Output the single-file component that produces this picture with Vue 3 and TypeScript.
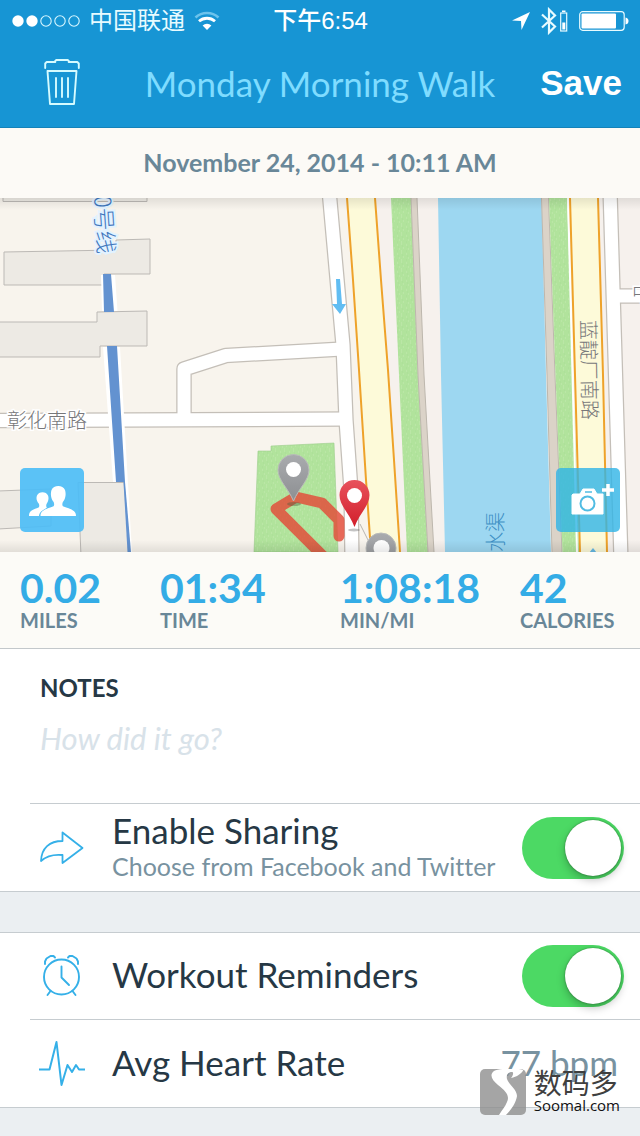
<script setup lang="ts">
import { ref } from 'vue'

interface Stat {
  value: string
  label: string
}

const stats: Stat[] = [
  { value: '0.02', label: 'MILES' },
  { value: '01:34', label: 'TIME' },
  { value: '1:08:18', label: 'MIN/MI' },
  { value: '42', label: 'CALORIES' },
]

const notes = ref('')
const sharing = ref(true)
const reminders = ref(true)
</script>

<template>
  <div class="page">
    <header class="top">
      <div class="status">
        <div class="carrier">
          <svg width="68" height="14" viewBox="0 0 68 14" aria-hidden="true">
            <g fill="#fff">
              <circle cx="6" cy="7" r="5.7" />
              <circle cx="20" cy="7" r="5.7" />
            </g>
            <g fill="none" stroke="#d9f7ff" stroke-width="1.1">
              <circle cx="34" cy="7" r="5.2" />
              <circle cx="48" cy="7" r="5.2" />
              <circle cx="62" cy="7" r="5.2" />
            </g>
          </svg>
          <span>中国联通</span>
          <svg width="26" height="20" viewBox="0 0 26 20" aria-hidden="true">
            <path d="M1.5 6.5a17 17 0 0 1 23 0" fill="none" stroke="#6cc3ec" stroke-width="2.6" />
            <path d="M5 10.3a12 12 0 0 1 16 0" fill="none" stroke="#fff" stroke-width="2.8" />
            <path d="M8.6 14.4a6.8 6.8 0 0 1 8.8 0L13 19z" fill="#fff" />
          </svg>
        </div>
        <time class="clock">下午6:54</time>
        <div class="indicators">
          <svg width="18" height="18" viewBox="0 0 18 18" aria-hidden="true">
            <path d="M18 0L9.500 18 9 9 0 8.500z" fill="#fff" />
          </svg>
          <svg width="27" height="28" viewBox="0 0 27 28" aria-hidden="true">
            <path d="M1 7.500l13 12-6 6v-23l6 6-13 12" fill="none" stroke="#e8fbff" stroke-width="2.200" />
            <rect x="19.700" y="6" width="6" height="18" fill="none" stroke="#e8fbff" stroke-width="1.200" />
            <path d="M21 3.500h3.500v1.500h-3.500zM21.300 15.500h3v7h-3z" fill="#fff" />
          </svg>
          <svg width="50" height="20" viewBox="0 0 50 20" aria-hidden="true">
            <rect x=".7" y=".7" width="44.500" height="18.600" rx="3" fill="none" stroke="#e8fbff" stroke-width="1.200" />
            <rect x="2.500" y="2.500" width="34.500" height="15" rx="1" fill="#fff" />
            <path d="M46.500 6.500q3 .5 3 3.500t-3 3.500z" fill="#fff" />
          </svg>
        </div>
      </div>
      <div class="nav">
        <button class="trash" type="button" aria-label="Delete workout">
          <svg width="36" height="48" viewBox="0 0 36 48" aria-hidden="true">
            <g fill="none" stroke="#d5fbff" stroke-width="1.900" stroke-linejoin="round" stroke-linecap="round">
              <path d="M1.200 9V4.500l1.500-1.500h8.600V1.800l1-.8h11.400l1 .8V3h8.600l1.500 1.500V9" />
              <path d="M3.500 12h29l-2.500 33h-24z" />
              <path d="M12 19v19M18 19v19M24 19v19" />
            </g>
          </svg>
        </button>
        <h1>Monday Morning Walk</h1>
        <button class="save" type="button">Save</button>
      </div>
    </header>

    <main>
      <p class="date">November 24, 2014 - 10:11 AM</p>

      <section class="map-area" aria-label="Route map">
        <svg class="map" viewBox="0 198 640 354" preserveAspectRatio="xMidYMid slice">
          <defs>
            <linearGradient id="redPin" x1="0" y1="0" x2="0" y2="1">
              <stop offset="0" stop-color="#e8525c" />
              <stop offset="1" stop-color="#d21f2b" />
            </linearGradient>
            <linearGradient id="greyPin" x1="0" y1="0" x2="0" y2="1">
              <stop offset="0" stop-color="#a9abae" />
              <stop offset="1" stop-color="#8d8f92" />
            </linearGradient>
            <linearGradient id="topShade" x1="0" y1="0" x2="0" y2="1">
              <stop offset="0" stop-color="#000" stop-opacity=".09" />
              <stop offset="1" stop-color="#000" stop-opacity="0" />
            </linearGradient>
            <pattern id="grass" width="9" height="9" patternUnits="userSpaceOnUse">
              <rect width="9" height="9" fill="#b1e39c" />
              <path d="M1 2h1M5 1h1M7 5h1M3 6h1M5 8h1" stroke="#c3eab0" />
              <path d="M2 4h1M6 3h1M1 8h1" stroke="#a9dd96" />
            </pattern>
          </defs>

          <rect y="198" width="640" height="354" fill="#f8f4ed" />
          <path d="M360 198H640V552H372z" fill="#f6f1ed" />

          <!-- buildings -->
          <g fill="#edeae4" stroke="#bcb9b5" stroke-width="1">
            <path d="M3 190H147V201.500H3z" />
            <path d="M4 252L116 250V240L150 239V274H104V285H4z" />
            <path d="M-2 322H97V312L147 311V346H100V357H-2z" />
            <path d="M-2 491L51 489V526L-2 529z" />
          </g>

          <!-- small roads -->
          <g fill="none" stroke-linejoin="round">
            <g stroke="#c4bfb8" stroke-width="15.500">
              <path d="M-10 420.500L346 419" />
              <path d="M184 420V369L226 355.500L342 349" />
              <path d="M329 190L338 290L343 345L346 420L351 490L352 560" />
              <path d="M610 190L614.500 340L621 560M617 296H650" />
            </g>
            <g stroke="#fff" stroke-width="13">
              <path d="M-10 420.500L346 419" />
              <path d="M184 420V369L226 355.500L342 349" />
              <path d="M329 190L338 290L343 345L346 420L351 490L352 560" />
              <path d="M610 190L614.500 340L621 560M617 296H650" />
            </g>
          </g>

          <!-- metro line -->
          <path d="M101 275h14l2.500 36H102zM103 347h17l12 205h-7L113 482z" fill="#fff" />
          <path d="M78 482.500H124L130 556H81z" fill="#edeae4" stroke="#bcb9b5" />
          <path d="M103 274h8l3 38h-10zM107 346h10l8 136h-9z" fill="#6392d0" />
          <path d="M123.500 482h1.500l6 70h-3.500z" fill="#6392d0" />

          <!-- main road, verge and river -->
          <path d="M347 198L353 280L358 370L366 480L371 552H400L394 460L388 370L381 280L375 198z" fill="#fdfad9" />
          <path d="M347 198L353 280L359 370L366 480L371 552M375 198L381 280L388 370L394 460L400 552" fill="none" stroke="#eea22a" stroke-width="2" />
          <path d="M391 198H411L418 375L428 552H407L399 375z" fill="url(#grass)" />
          <path d="M411 198H417L424 375L434 552H428L418 375z" fill="#dbd3c8" />
          <path d="M411 198L418 375L428 552M417 198L424 375L434 552" fill="none" stroke="#bdb7ad" />
          <path d="M438 198H541.500L546 375L551 552H445L441 375z" fill="#9dd7f1" />
          <path d="M541.500 198H548.500L555 375L562 552H552L547 375z" fill="#dbd3c8" />
          <path d="M541.500 198L547 375L552 552M548.500 198L555 375L562 552" fill="none" stroke="#bdb7ad" />
          <path d="M549 198H567L573 375L579 552H562.500L555.500 375z" fill="url(#grass)" />
          <path d="M570 198H598L604 375L607 552H580L575 375z" fill="#fdfad9" />
          <path d="M568 198L572.500 375L577 552" fill="none" stroke="#fff" stroke-width="2" />
          <path d="M570 198L575 375L580 552M598 198L603 375L607 552" fill="none" stroke="#eea22a" stroke-width="2" />

          <!-- park -->
          <path d="M258 451H271V446L334 443L338 552H254z" fill="url(#grass)" stroke="#9ccc8c" stroke-width=".6" />
          <path d="M360 524l9 18" stroke="#b9b5b0" />

          <!-- one-way arrows -->
          <path d="M336 279h4l2 25h4l-6 10-8-10h5z" fill="#61bdf2" />
          <path d="M593 548l4 5h-8z" fill="#67b9e4" />

          <!-- labels -->
          <g class="map-text">
            <text x="7" y="428" class="halo">彰化南路</text>
            <text x="632" y="301" class="halo">中</text>
            <text transform="translate(581 320) rotate(89)">蓝靛厂南路</text>
            <text transform="translate(503 552) rotate(-90)" class="water">水渠</text>
            <text transform="translate(94 196) rotate(86)" class="metro">0号线</text>
          </g>

          <!-- recorded route -->
          <path d="M323 556L276 509L296 497L322 503L339 520V536" fill="none" stroke="#e34a38" stroke-opacity=".82" stroke-width="11" stroke-linejoin="round" stroke-linecap="round" />
          <ellipse cx="294" cy="504" rx="7" ry="2" fill="#4d5b3d" opacity=".4" />
          <ellipse cx="354" cy="530" rx="6" ry="1.500" fill="#555" opacity=".35" />

          <!-- pins -->
          <path d="M293.500 501C288 488 278 480 278 470a15.500 15.500 0 0 1 31 0C309 480 299 488 293.500 501z" fill="url(#greyPin)" stroke="#b9bbba" stroke-width="1" />
          <circle cx="293.500" cy="469.500" r="7.500" fill="#fff" />
          <path d="M354.500 527C350 514 339.500 506 339.500 495a15 15 0 0 1 30 0C369.500 506 359 514 354.500 527z" fill="url(#redPin)" />
          <circle cx="354.500" cy="495.500" r="7.500" fill="#fff" />
          <path d="M381 580C377 567 366 560 366 548a15 15 0 0 1 30 0C396 560 385 567 381 580z" fill="url(#greyPin)" stroke="#b9bbba" stroke-width="1" />
          <circle cx="381.500" cy="548" r="8" fill="#fff" />

          <rect y="198" width="640" height="12" fill="url(#topShade)" />
          <rect y="540" width="640" height="12" fill="url(#topShade)" transform="rotate(180 320 546)" />
        </svg>

        <button class="map-btn friends" type="button" aria-label="Tag friends">
          <svg width="64" height="64" viewBox="0 0 64 64" aria-hidden="true">
            <g fill="#fff">
              <path d="M9 48c0-5 3-6 9.500-8.500 1-.5 1-3 .2-4C16.500 33 16 30 17 27.500c1.500-4.500 9.500-4.500 11 0 1 2.500.5 5.500-1.200 8-.8 1-.8 3.500.2 4-5 3.500-7.500 4-8 8.500z" />
              <path d="M20.500 48c0-5 3.500-6.500 12.500-9.500 1.500-.6 1.500-3.500.3-5-2.500-3-3-8-1.800-11.500 2-5.500 11.500-5.500 13.500 0 1.200 3.500.7 8.500-1.800 11.500-1.200 1.500-1.200 4.400.3 5C52.500 41.500 56 43 56 48z" />
            </g>
          </svg>
        </button>
        <button class="map-btn camera" type="button" aria-label="Add photo">
          <svg width="64" height="64" viewBox="0 0 64 64" aria-hidden="true">
            <path d="M17 26h7l3-5h11l3 5h6v20H16V27z" fill="#fff" stroke="#fff" stroke-linejoin="round" />
            <path d="M29 24h7" stroke="#50bce3" stroke-width="1.500" />
            <circle cx="31.500" cy="35.500" r="7" fill="none" stroke="#50bce3" stroke-width="2" />
            <path d="M52 16v12M46 22h12" stroke="#fff" stroke-width="3.500" />
          </svg>
        </button>
      </section>

      <dl class="stats">
        <div v-for="s in stats" :key="s.label" class="stat">
          <dt>{{ s.label }}</dt>
          <dd>{{ s.value }}</dd>
        </div>
      </dl>

      <section class="group">
        <div class="notes">
          <label for="notes">NOTES</label>
          <textarea id="notes" v-model="notes" placeholder="How did it go?"></textarea>
        </div>
        <div class="row ruled">
          <svg class="icon" width="48" height="48" viewBox="0 0 48 48" aria-hidden="true">
            <path d="M24.500 8.500L44.500 24 24.500 39V31C15 30 8 32.500 3 37 3.500 24 11.500 17 24.500 17z" fill="none" stroke="#35b0e8" stroke-width="1.800" stroke-linejoin="round" />
          </svg>
          <label class="text" for="sharing">
            <span class="title">Enable Sharing</span>
            <span class="sub">Choose from Facebook and Twitter</span>
          </label>
          <input id="sharing" v-model="sharing" class="switch" type="checkbox" role="switch" />
        </div>
      </section>

      <section class="group second">
        <div class="row">
          <svg class="icon" width="48" height="48" viewBox="0 0 48 48" aria-hidden="true">
            <g fill="none" stroke="#35b0e8" stroke-width="1.900" stroke-linecap="round" stroke-linejoin="round">
              <circle cx="23.500" cy="25" r="17.500" />
              <path d="M23.500 14.500v11l7.500 7.500" />
              <path d="M7 12V9.500L8.500 6.500l4-2.500h3L17 5.500M40 12V9.500l-1.500-3-4-2.500h-3L30 5.500" />
              <path d="M12.500 39l-3 4M34.500 39l3 4" />
            </g>
          </svg>
          <label class="text" for="reminders"><span class="title">Workout Reminders</span></label>
          <input id="reminders" v-model="reminders" class="switch" type="checkbox" role="switch" />
        </div>
        <div class="row ruled">
          <svg class="icon" width="48" height="48" viewBox="0 0 48 48" aria-hidden="true">
            <path d="M1 29.500h10.500L18.500 2l5 43 6-20 4.500 7 4-7 3 4.500h6" fill="none" stroke="#35b0e8" stroke-width="2" stroke-linejoin="round" />
          </svg>
          <div class="text"><span class="title">Avg Heart Rate</span></div>
          <span class="reading">77 bpm</span>
        </div>
      </section>
    </main>

    <div class="mark">
      <svg width="46" height="46" viewBox="0 0 46 46" aria-hidden="true">
        <rect width="46" height="46" rx="5" fill="#8c8c8c" fill-opacity=".78" />
        <path d="M44 1C38-1 20-1 14 2c-5 4-2 9 4 14 8 6 12 11 9 17-2 5-5 8-8 13h7c5-5 10-12 11-19 0-7-8-11-10-17-1-4 1-7 5-7 2 0 1 4-1 6 6-1 12-5 13-10z" fill="#fff" />
      </svg>
      <div class="mark-text">
        <span class="mark-cn">数码多</span>
        <span class="mark-en">Soomal.com</span>
      </div>
    </div>
  </div>
</template>

<style>
body {
  background: #ebeff2;
}
</style>

<style scoped>
.page {
  position: relative;
  min-height: 100vh;
  background: #ebeff2;
  font-family: Lato, "Noto Sans CJK SC", sans-serif;
  font-variant-ligatures: none;
  color: #263845;
}
button {
  padding: 0;
  border: 0;
  background: none;
  cursor: pointer;
}
svg {
  display: block;
  flex: none;
}
.top {
  box-sizing: border-box;
  height: 128px;
  background: #1795d4;
  border-bottom: 1px solid #1482b9;
}
.status {
  display: grid;
  grid-template-columns: 1fr auto 1fr;
  align-items: center;
  height: 42px;
  padding: 0 11px 0 12px;
  color: #e8fbff;
  font-family: "Liberation Sans", "Noto Sans CJK SC", sans-serif;
  font-size: 24px;
  line-height: 40px;
}
.carrier {
  display: flex;
  align-items: center;
  gap: 9px;
}
.clock {
  color: #fff;
  font-weight: 500;
}
.indicators {
  display: flex;
  align-items: center;
  justify-content: flex-end;
  gap: 11px;
}
.nav {
  display: grid;
  grid-template-columns: 100px 1fr 100px;
  align-items: center;
  height: 82px;
}
.trash {
  justify-self: center;
  padding-left: 24px;
}
h1 {
  margin: 0;
  color: #7fdcff;
  font-size: 35px;
  font-weight: 400;
  line-height: 44px;
  text-align: center;
  white-space: nowrap;
}
.save {
  justify-self: end;
  padding-right: 18px;
  color: #fff;
  font-family: "Liberation Sans", sans-serif;
  font-size: 35px;
  font-weight: 700;
}
.date {
  box-sizing: border-box;
  height: 70px;
  margin: 0;
  background: #fcfaf6;
  color: #698798;
  font-size: 25px;
  font-weight: 700;
  line-height: 68px;
  text-align: center;
}
.map-area {
  position: relative;
  height: 354px;
}
.map {
  width: 100%;
  height: 100%;
}
.map-text {
  fill: #77777a;
  font-family: "Noto Sans CJK SC", sans-serif;
  font-size: 20px;
  font-weight: 300;
}
.halo {
  stroke: #fff;
  stroke-width: 3px;
  paint-order: stroke;
}
.water {
  fill: #3c8fc4;
}
.metro {
  fill: #3f77bd;
  stroke: #e2f2ff;
  stroke-width: 4px;
  paint-order: stroke;
  font-size: 23px;
}
.map-btn {
  position: absolute;
  bottom: 20px;
  border-radius: 5px;
}
.friends {
  left: 20px;
  background: rgba(77, 189, 246, 0.92);
}
.camera {
  right: 20px;
  background: rgba(48, 180, 230, 0.8);
}
.stats {
  display: grid;
  grid-template-columns: 140fr 180fr 180fr 100fr;
  box-sizing: border-box;
  height: 97px;
  margin: 0;
  padding: 14px 20px 0;
  background: #fcfbf7;
  border-bottom: 1px solid #c3c8cb;
}
.stat {
  display: flex;
  flex-direction: column-reverse;
  justify-content: flex-end;
}
dt {
  color: #698798;
  font-size: 20px;
  font-weight: 700;
  line-height: 20px;
}
dd {
  margin: 0;
  color: #34ace6;
  font-size: 41px;
  font-weight: 700;
  line-height: 44px;
}
.group {
  background: #fff;
  border-bottom: 1px solid #c6ccd0;
}
.second {
  margin-top: 40px;
  border-top: 1px solid #c6ccd0;
}
.notes {
  display: flex;
  flex-direction: column;
  gap: 18px;
  box-sizing: border-box;
  height: 154px;
  padding: 24px 40px 0;
}
.notes label {
  font-size: 24px;
  font-weight: 700;
  line-height: 30px;
}
textarea {
  height: 60px;
  padding: 0;
  border: 0;
  outline: 0;
  resize: none;
  background: transparent;
  color: #263845;
  font: 31px/34px Lato, sans-serif;
}
textarea::placeholder {
  color: #d8e2e9;
  font-style: italic;
  opacity: 1;
}
.row {
  display: flex;
  align-items: center;
  box-sizing: border-box;
  height: 86px;
  margin-left: 30px;
  padding: 0 16px 0 8px;
}
.ruled {
  height: 88px;
  border-top: 1px solid #c6ccd0;
}
.text {
  display: flex;
  flex: 1;
  flex-direction: column;
  padding: 0 0 4px 26px;
}
.title {
  font-size: 35px;
  line-height: 40px;
}
.sub {
  color: #7892a0;
  font-size: 25px;
  line-height: 32px;
}
.reading {
  padding: 0 6px 4px 0;
  color: #7892a0;
  font-size: 35px;
  font-weight: 400;
}
.switch {
  flex: none;
  box-sizing: border-box;
  width: 102px;
  height: 62px;
  margin: 0;
  padding: 3px;
  appearance: none;
  border-radius: 31px;
  background: #dfe4e7;
  cursor: pointer;
}
.switch::before {
  content: "";
  display: block;
  width: 56px;
  height: 56px;
  border-radius: 50%;
  background: #fff;
  box-shadow: 0 4px 8px rgba(0, 0, 0, 0.25), 0 0 2px rgba(0, 0, 0, 0.4);
}
.switch:checked {
  background: #4cd964;
}
.switch:checked::before {
  margin-left: auto;
}
.mark {
  position: absolute;
  right: 20px;
  bottom: 21px;
  display: flex;
  align-items: center;
  gap: 8px;
}
.mark-text {
  display: flex;
  flex-direction: column;
}
.mark-cn {
  color: #3f3f3f;
  font-family: "Noto Sans CJK SC", sans-serif;
  font-size: 28px;
  line-height: 26px;
}
.mark-en {
  color: #111;
  font-family: "Open Sans", sans-serif;
  font-size: 15px;
  line-height: 20px;
}
</style>
